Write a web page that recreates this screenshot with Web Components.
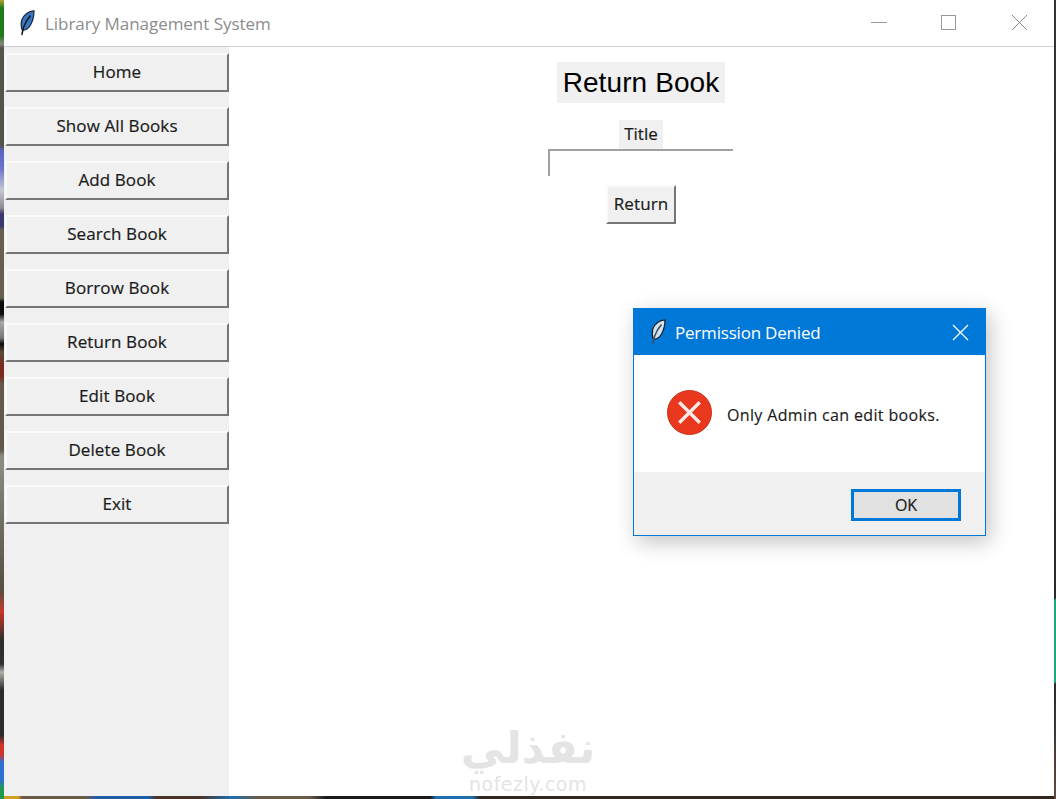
<!DOCTYPE html>
<html>
<head>
<meta charset="utf-8">
<title>Library Management System</title>
<style>
html, body { margin: 0; height: 100%; }
body { font-family: "Open Sans", "Liberation Sans", sans-serif; overflow: hidden; }
</style>
</head>
<body>
<desktop-frame>
    <app-window heading="Library Management System">
        <side-bar slot="side">
            <tk-button>Home</tk-button>
            <tk-button>Show All Books</tk-button>
            <tk-button>Add Book</tk-button>
            <tk-button>Search Book</tk-button>
            <tk-button>Borrow Book</tk-button>
            <tk-button>Return Book</tk-button>
            <tk-button>Edit Book</tk-button>
            <tk-button>Delete Book</tk-button>
            <tk-button>Exit</tk-button>
        </side-bar>
        <return-form></return-form>
        <water-mark></water-mark>
    </app-window>
    <message-box heading="Permission Denied">Only Admin can edit books.</message-box>
</desktop-frame>

<script>
const FEATHER = (fill, edge, spine) => `<svg width="16" height="26" viewBox="0 0 16 26">
    <path d="M15 .8C10 1 4.500 4.500 2.800 10 1.800 14 2.200 17.500 3.200 20 6.500 20.500 9.500 18.500 11.500 15 13.800 11 15 6 15 .8z" fill="${fill}" stroke="${edge}" stroke-width="1.200"/>
    <path d="M11.500 5.500 7.500 11 4.500 17.500 2.800 25" fill="none" stroke="${spine}" stroke-width="1.500"/>
</svg>`;

class DesktopFrame extends HTMLElement {
    constructor() {
        super();
        this.attachShadow({ mode: "open" });
        this.shadowRoot.innerHTML = `<style>
        :host {
            display: flex;
            position: relative;
            box-sizing: border-box;
            width: 1056px;
            height: 799px;
            padding: 0 2px 3px 4px;
            background-color: #4a4038;
            background-image:
                linear-gradient(to bottom, #b8a030 0, #1f7a1c 8px, #1f7a1c 36px, #8a8a80 44px, #56524c 48px, #56524c 146px, #5a63c0 150px, #6a74cc 168px, #c4c8d4 190px, #8a8a90 208px, #3a3670 214px, #3a3670 226px, #655f50 230px, #655f50 298px, #0c0c0c 302px, #0c0c0c 314px, #a8a8a8 322px, #777 338px, #0c0c0c 344px, #5c4a3c 352px, #7a2a1c 366px, #7a2a1c 376px, #665a48 384px, #5f5a48 450px, #8d8d85 456px, #55503f 590px, #c9362b 612px, #2d2d2d 640px, #303030 664px, #b0b0a8 672px, #2b2b2b 690px, #2b2b2b 735px, #d0352b 745px, #d0352b 755px, #2f6fd0 762px, #2f6fd0 780px, #1f9a50 788px),
                linear-gradient(to bottom, #333 0, #2a2a2a 598px, #1fa67a 600px, #1fa67a 682px, #2a2a2a 684px, #5b4b40 799px),
                linear-gradient(to right, #d0a020 0, #d0a020 18px, #6a5a48 22px, #6a5a48 84px, #1f5fa8 98px, #1f5fa8 148px, #4a3428 156px, #4a3428 200px, #1f70b0 232px, #6a5a48 258px, #6a5a48 310px, #1a1a1a 326px, #1a1a1a 430px, #1f70b0 436px, #1f70b0 472px, #30261e 480px);
            background-size: 4px 100%, 2px 100%, 100% 3px;
            background-position: left top, right top, left bottom;
            background-repeat: no-repeat;
        }
        </style><slot></slot>`;
    }
}

class AppWindow extends HTMLElement {
    constructor() {
        super();
        this.attachShadow({ mode: "open" });
        this.shadowRoot.innerHTML = `<style>
        :host { display: flex; flex-direction: column; flex: 1; background: #fff; position: relative; }
        header {
            display: flex;
            align-items: center;
            height: 46px;
            border-bottom: 1px solid #d0d0d0;
            color: #8c8c8c;
        }
        .icon { display: flex; margin: 0 10px 0 15px; }
        h1 { flex: 1; margin: 0; font-weight: 400; font-size: 17px; letter-spacing: -.04px; }
        .controls { display: flex; }
        .controls svg { display: block; width: 71px; height: 46px; }
        main { flex: 1; display: flex; min-height: 0; }
        .content { flex: 1; position: relative; display: flex; flex-direction: column; }
        </style>
        <header>
            <span class="icon">${FEATHER("#3a78c0", "#16293d", "#0d1a28")}</span>
            <h1 id="heading"></h1>
            <div class="controls">
                <svg viewBox="0 0 71 46"><path d="M30 22.500h16" stroke="#999" fill="none"/></svg>
                <svg viewBox="0 0 71 46"><rect x="29.500" y="15.500" width="14" height="14" stroke="#999" fill="none"/></svg>
                <svg viewBox="0 0 71 46"><path d="M29 15l15 15M44 15 29 30" stroke="#888" fill="none"/></svg>
            </div>
        </header>
        <main>
            <slot name="side"></slot>
            <div class="content"><slot></slot></div>
        </main>`;
    }
    connectedCallback() {
        this.shadowRoot.querySelector("#heading").textContent = this.getAttribute("heading");
    }
}

class SideBar extends HTMLElement {
    constructor() {
        super();
        this.attachShadow({ mode: "open" });
        this.shadowRoot.innerHTML = `<style>
        :host {
            display: flex;
            flex-direction: column;
            gap: 15px;
            box-sizing: border-box;
            width: 225px;
            padding: 6px 0 0 1px;
            background: #f0f0f0;
        }
        </style><slot></slot>`;
    }
}

class TkButton extends HTMLElement {
    constructor() {
        super();
        this.attachShadow({ mode: "open" });
        this.shadowRoot.innerHTML = `<style>
        :host {
            display: flex;
            align-items: center;
            justify-content: center;
            box-sizing: border-box;
            height: 39px;
            padding-bottom: 3px;
            background: #f0f0f0;
            border: 2px solid;
            border-color: #fafafa #757575 #757575 #fafafa;
            color: #1a1a1a;
            font-size: 17px;
            letter-spacing: .1px;
            -webkit-text-stroke: .2px #1a1a1a;
        }
        </style><slot></slot>`;
    }
}

class ReturnForm extends HTMLElement {
    constructor() {
        super();
        this.attachShadow({ mode: "open" });
        this.shadowRoot.innerHTML = `<style>
        :host {
            display: flex;
            flex-direction: column;
            align-items: center;
            padding-top: 15px;
            margin-left: -1px;
        }
        h2 {
            margin: 0;
            padding: 0 6px;
            height: 41px;
            background: #f0f0f0;
            color: #000;
            font: 400 28px/41px "Liberation Sans", sans-serif;
            letter-spacing: .1px;
        }
        label {
            margin-top: 17px;
            padding: 0 5px;
            height: 29px;
            line-height: 27px;
            background: #f0f0f0;
            color: #1a1a1a;
            font-size: 17px;
            -webkit-text-stroke: .2px #1a1a1a;
        }
        .entry {
            box-sizing: border-box;
            width: 185px;
            height: 27px;
            margin-left: -1px;
            border-top: 2px solid #a0a0a0;
            border-left: 2px solid #a0a0a0;
        }
        tk-button { margin-top: 9px; width: 70px; }
        </style>
        <h2>Return Book</h2>
        <label>Title</label>
        <div class="entry"></div>
        <tk-button>Return</tk-button>`;
    }
}

class WaterMark extends HTMLElement {
    constructor() {
        super();
        this.attachShadow({ mode: "open" });
        this.shadowRoot.innerHTML = `<style>
        :host {
            position: absolute;
            left: 224px;
            bottom: 0;
            display: flex;
            flex-direction: column;
            align-items: center;
            width: 150px;
            color: #e4e4e4;
        }
        .ar { font: 700 44px/50px "DejaVu Sans", sans-serif; height: 50px; }
        .en { font: 400 19px/23px "DejaVu Sans", sans-serif; height: 23px; letter-spacing: .5px; }
        </style>
        <div class="ar" dir="rtl">نفذلي</div>
        <div class="en">nofezly.com</div>`;
    }
}

class MessageBox extends HTMLElement {
    constructor() {
        super();
        this.attachShadow({ mode: "open" });
        this.shadowRoot.innerHTML = `<style>
        :host {
            position: absolute;
            left: 633px;
            top: 308px;
            display: flex;
            flex-direction: column;
            box-sizing: border-box;
            width: 353px;
            height: 228px;
            background: #fff;
            border: 1px solid #0078d7;
            box-shadow: 4px 6px 20px rgba(0, 0, 0, .24);
        }
        header {
            display: flex;
            align-items: center;
            height: 46px;
            background: #0078d7;
            color: #fff;
        }
        .icon { display: flex; margin: 0 9px 0 16px; }
        h3 { flex: 1; margin: 0; font-weight: 400; font-size: 17px; letter-spacing: -.2px; }
        .close { display: block; width: 50px; height: 46px; }
        .body { flex: 1; display: flex; align-items: center; gap: 15px; padding: 0 0 1px 33px; }
        .body svg { margin-top: -2px; }
        .text { color: #1a1a1a; font-size: 16px; letter-spacing: .35px; -webkit-text-stroke: .15px #1a1a1a; padding-top: 3px; }
        footer {
            display: flex;
            justify-content: flex-end;
            box-sizing: border-box;
            height: 63px;
            padding: 17px 24px 0 0;
            background: #f0f0f0;
        }
        button {
            box-sizing: border-box;
            width: 110px;
            height: 32px;
            padding: 0;
            background: #e1e1e1;
            border: 3px solid #0078d7;
            color: #1a1a1a;
            font: 400 16px "Open Sans", sans-serif;
            -webkit-text-stroke: .2px #1a1a1a;
        }
        </style>
        <header>
            <span class="icon">${FEATHER("#d6e2ee", "#10202e", "#3a5068")}</span>
            <h3 id="heading"></h3>
            <svg class="close" viewBox="0 0 50 46"><path d="M18 16l15 15M33 16 18 31" stroke="#fff" stroke-width="1.300" fill="none"/></svg>
        </header>
        <div class="body">
            <svg width="45" height="45" viewBox="0 0 46 46">
                <circle cx="23" cy="23" r="22.500" fill="#e9381d" stroke="#c8301a"/>
                <path d="M12.500 12.500l21 21M33.500 12.500l-21 21" stroke="#fbe9e4" stroke-width="3.400" fill="none"/>
            </svg>
            <span class="text"><slot></slot></span>
        </div>
        <footer><button>OK</button></footer>`;
    }
    connectedCallback() {
        this.shadowRoot.querySelector("#heading").textContent = this.getAttribute("heading");
    }
}

customElements.define("desktop-frame", DesktopFrame);
customElements.define("app-window", AppWindow);
customElements.define("side-bar", SideBar);
customElements.define("tk-button", TkButton);
customElements.define("return-form", ReturnForm);
customElements.define("water-mark", WaterMark);
customElements.define("message-box", MessageBox);
</script>
</body>
</html>
